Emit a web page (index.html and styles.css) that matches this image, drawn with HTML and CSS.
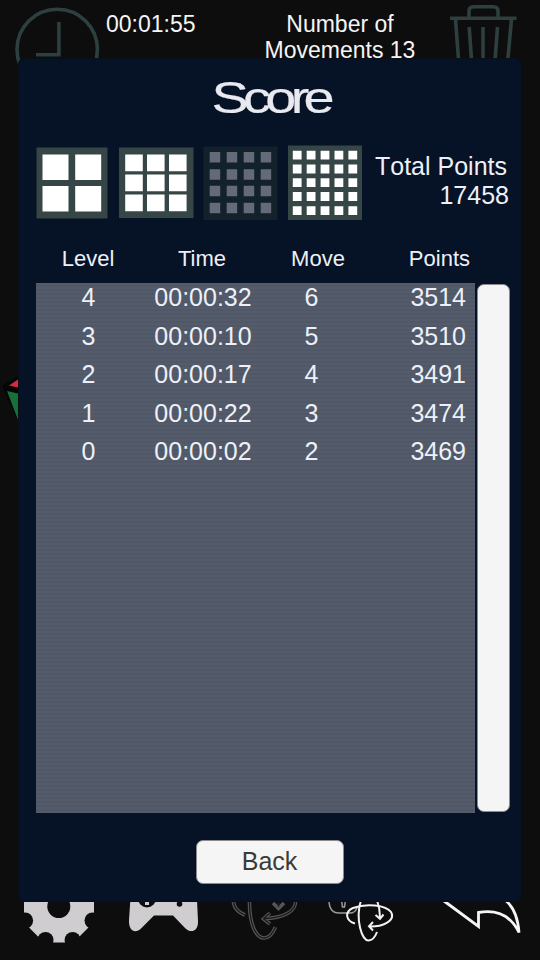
FILE: index.html
```
<!DOCTYPE html>
<html lang="en">
<head>
  <meta charset="UTF-8">
  <meta name="viewport" content="width=device-width, initial-scale=1.0">
  <title>Score</title>
  <link rel="stylesheet" href="styles.css">
</head>
<body>
  <div class="game">
    <div class="top-bar">
      <svg class="clock-icon" viewBox="15 7 85 85">
        <circle cx="57.2" cy="49.5" r="40.2"/>
        <path d="M36 54.7H58.9V22"/>
      </svg>
      <div class="timer">00:01:55</div>
      <div class="movements">Number of Movements 13</div>
      <svg class="trash-icon" viewBox="450 4 67 80">
        <path d="M450 18.2H516.5"/>
        <path d="M469 17V11Q469 6.8 474 6.8H493Q498 6.8 498 11V17"/>
        <path d="M455.5 19L460 80H506L511.500 19"/>
        <path d="M469.200 27L472.500 74M483 27V74M497.500 27L494 74"/>
      </svg>
    </div>

    <div class="board">
      <svg class="cube-icon" viewBox="0 374 24 50">
        <path class="cube-body" d="M2 386L24 372V424L18 421Z"/>
        <path class="cube-red" d="M9 385.500L18 379.500V387.500Z"/>
        <path class="cube-green" d="M7 391L18 393.500V420Z"/>
      </svg>
    </div>

    <div class="bottom-bar">
      <svg class="gear-icon" viewBox="22 870 74 74">
        <path class="gear-body" d="M24 892L44 872H74L94 892V921L87 929L80 936L73.500 942.500H44L37.500 936L30.500 929L24 921Z"/>
        <g class="gear-cut">
          <circle cx="58.8" cy="906.500" r="11.500"/>
          <circle cx="92.500" cy="920.500" r="8"/>
          <circle cx="72.600" cy="940" r="8"/>
          <circle cx="45.500" cy="940" r="8"/>
          <circle cx="25.100" cy="920.500" r="8"/>
        </g>
      </svg>
      <svg class="pad-icon" viewBox="128 870 72 74">
        <path class="pad-body" d="M131 890L129 920C128.500 932 136 933.500 141 928.500L154 915.500H173L185 928C190 933.500 198.500 932 198 921L196.500 890Z"/>
        <circle class="pad-cut" cx="147" cy="898.500" r="9"/>
        <path class="pad-body" d="M145 902H149V905H145Z"/>
        <circle class="pad-cut" cx="179.500" cy="904" r="2.800"/>
      </svg>
      <svg class="rotate-icon" viewBox="230 870 70 74">
        <g class="rotate-edge">
          <path d="M233.500 900Q233 910 245 915"/>
          <path d="M249.500 900C249 924 256 938 264 938C269 938 273 933 275.500 927"/>
          <path d="M295.500 900C297 912 282 918 264 918.500M270 913L263.500 918.800L270 924"/>
          <path d="M273 903L278.500 908.500L284 903"/>
        </g>
        <g class="rotate-core">
          <path d="M233.500 900Q233 910 245 915"/>
          <path d="M249.500 900C249 924 256 938 264 938C269 938 273 933 275.500 927"/>
          <path d="M295.500 900C297 912 282 918 264 918.500M270 913L263.500 918.800L270 924"/>
          <path d="M278.500 900V907"/>
        </g>
      </svg>
      <svg class="lock-icon" viewBox="328 870 66 74">
        <path class="lock-body" d="M329 900Q329 913 339 913H350Q355 913 357 908M341.500 900L342.500 907H344.500L345.500 900"/>
        <path d="M355 923.500C346 921 344 912 353 908C366 903 386 905 391 912C396 921 382 927 369 926.500M373 922L369 926.300L373 930.500"/>
        <path d="M361 900C355 920 362 940.500 368.500 940.500C373 940.500 375.500 936 377 932"/>
        <path d="M377 900Q380 909 380 917.500M375.500 915L380 918.800L383.500 914.500"/>
      </svg>
      <svg class="back-icon" viewBox="440 870 82 74">
        <path d="M442 899.500L478.500 926.500V912.500C495 909.500 510 914 519 932.500C518 918 514 907 505 900"/>
      </svg>
    </div>
  </div>

  <div class="score-panel">
    <h1 class="score-title"><span>Score</span></h1>

    <div class="summary">
      <div class="sizes">
        <svg class="size-icon" viewBox="0 0 74 74">
          <path class="frame" d="M.5 1.500H71.500V72.500H.5Z"/>
          <path class="cells" d="M6.500 8.500h26v25.500h-26zM39.200 8.500h26v25.500h-26zM6.500 40h26v25.500h-26zM39.200 40h26v25.500h-26z"/>
        </svg>
        <svg class="size-icon" viewBox="0 0 74 74">
          <path class="frame" d="M-1 1.500H73.500V72H-1Z"/>
          <path class="cells" d="M5.200 8.500h17.600v16.800h-17.600zM27 8.500h17.600v16.800h-17.600zM49 8.500h17.600v16.800h-17.600zM5.200 28.500h17.600v16.800h-17.600zM27 28.500h17.600v16.800h-17.600zM49 28.500h17.600v16.800h-17.600zM5.200 48.500h17.600v16.800h-17.600zM27 48.500h17.600v16.800h-17.600zM49 48.500h17.600v16.800h-17.600z"/>
        </svg>
        <svg class="size-icon disabled" viewBox="0 0 74 74">
          <path class="frame" d="M-.5 .5H73.500V74H-.5Z"/>
          <path class="cell-row" d="M5.700 11.300H68"/>
          <path class="cell-row" d="M5.700 28.500H68"/>
          <path class="cell-row" d="M5.700 45H68"/>
          <path class="cell-row" d="M5.700 62H68"/>
        </svg>
        <svg class="size-icon five" viewBox="0 0 74 74">
          <path class="frame" d="M0-.5H74V74H0Z"/>
          <path class="cell-row" d="M4.800 9.200H70"/>
          <path class="cell-row" d="M4.800 23H70"/>
          <path class="cell-row" d="M4.800 36.700H70"/>
          <path class="cell-row" d="M4.800 50.500H70"/>
          <path class="cell-row" d="M4.800 64.700H70"/>
        </svg>
      </div>
      <div class="total">
        <div class="total-label">Total Points</div>
        <div class="total-value">17458</div>
      </div>
    </div>

    <div class="table-head">
      <div>Level</div>
      <div>Time</div>
      <div>Move</div>
      <div class="points">Points</div>
    </div>

    <div class="table-area">
      <div class="table-body">
        <div class="row"><div>4</div><div>00:00:32</div><div>6</div><div class="points">3514</div></div>
        <div class="row"><div>3</div><div>00:00:10</div><div>5</div><div class="points">3510</div></div>
        <div class="row"><div>2</div><div>00:00:17</div><div>4</div><div class="points">3491</div></div>
        <div class="row"><div>1</div><div>00:00:22</div><div>3</div><div class="points">3474</div></div>
        <div class="row"><div>0</div><div>00:00:02</div><div>2</div><div class="points">3469</div></div>
      </div>
      <div class="scrollbar"></div>
    </div>

    <button class="back-btn">Back</button>
  </div>
</body>
</html>
```

FILE: styles.css
```
* {
  margin: 0;
  padding: 0;
  box-sizing: border-box;
  font-family: "Liberation Sans", Arial, sans-serif;
}

body {
  position: relative;
  width: 540px;
  height: 960px;
  background-color: #0d0d0d;
  overflow: hidden;
}

svg {
  display: block;
  flex: none;
  fill: none;
}

.game {
  display: flex;
  flex-direction: column;
  height: 100%;
}

/* top bar */
.top-bar {
  display: flex;
  height: 100px;
  padding-left: 15px;
  color: #f5f5f5;
  font-size: 23px;
  line-height: 26px;
}

.clock-icon {
  width: 85px;
  height: 85px;
  margin-top: 7px;
  stroke: #2e3f3f;
  stroke-width: 3.6;
}

.timer {
  width: 104px;
  margin: 11px 0 0 6px;
}

.movements {
  width: 180px;
  margin: 11px 0 0 40px;
  text-align: center;
}

.trash-icon {
  width: 67px;
  height: 80px;
  margin: 4px 0 0 20px;
  stroke: #2e3f3f;
  stroke-width: 3.6;
}

.board {
  flex: 1;
  padding-top: 274px;
}

.cube-icon {
  width: 24px;
  height: 50px;
}

.cube-body {
  fill: #050505;
}

.cube-red {
  fill: #d92a3c;
}

.cube-green {
  fill: #17703a;
}

/* bottom bar */
.bottom-bar {
  display: flex;
  height: 90px;
  padding-left: 22px;
}

.bottom-bar svg {
  height: 74px;
}

.gear-icon {
  width: 74px;
  margin-right: 32px;
}

.gear-body,
.pad-body {
  fill: #cfcdcf;
}

.gear-cut,
.pad-cut {
  fill: #0d0d0d;
}

.pad-icon {
  width: 72px;
  margin-right: 30px;
}

.rotate-icon {
  width: 70px;
  margin-right: 28px;
}

.rotate-edge {
  stroke: #555;
  stroke-width: 3.6;
}

.rotate-core {
  stroke: #1c1c1c;
  stroke-width: 1.3;
}

.lock-icon {
  width: 66px;
  margin-right: 46px;
  stroke: #f2f2f2;
  stroke-width: 2;
}

.lock-body {
  stroke: #9a9a9a;
  stroke-width: 1.5;
}

.back-icon {
  width: 82px;
  stroke: #f5f5f5;
  stroke-width: 2.8;
}

/* score dialog */
.score-panel {
  position: absolute;
  top: 58px;
  left: 18px;
  width: 504px;
  height: 844px;
  padding: 0 11px 0 18px;
  display: flex;
  flex-direction: column;
  background-color: #061226;
  border: 1px solid #080e1a;
  border-radius: 6px;
  color: #edf0f8;
}

.score-title {
  height: 87px;
  padding-top: 13px;
  margin-right: 6px;
  text-align: center;
  font-size: 44px;
  line-height: 52px;
  font-weight: normal;
  color: #e8eaf0;
}

.score-title span {
  display: inline-block;
  letter-spacing: -4.5px;
  transform: scaleX(1.27);
  -webkit-text-stroke: 0.2px #e8eaf0;
}

.summary {
  display: flex;
  justify-content: space-between;
  height: 94px;
  margin-left: -1px;
  padding-right: 1px;
}

.sizes {
  display: flex;
  gap: 10px;
}

.size-icon {
  width: 74px;
  height: 74px;
  overflow: visible;
}

.frame {
  fill: #364545;
}

.cells {
  fill: #fff;
}

.cell-row {
  stroke: #fff;
  stroke-width: 10.5;
  stroke-dasharray: 10.5 6.5;
}

.disabled .frame {
  fill: #13212b;
}

.disabled .cell-row {
  stroke: #656a7b;
}

.five .cell-row {
  stroke-width: 8.8;
  stroke-dasharray: 8.8 5.1;
}

.total {
  padding-top: 6px;
  text-align: right;
  font-size: 25px;
  line-height: 29px;
  white-space: nowrap;
  font-kerning: none;
}

.total-label {
  margin-right: 2px;
}

.table-head,
.row {
  display: grid;
  text-align: center;
}

.table-head {
  grid-template-columns: 104px 124px 108px 98px;
  height: 43px;
  margin-left: -1px;
  font-size: 22px;
  line-height: 38px;
}

.table-area {
  display: flex;
  gap: 2px;
  height: 530px;
  margin-left: -1px;
}

.table-body {
  width: 439px;
  background: repeating-linear-gradient(#545b6b 0 2px, #505868 2px 4px);
}

.row {
  grid-template-columns: 105px 124px 93px 108px;
  height: 38.5px;
  font-size: 25px;
  line-height: 29px;
}

.points {
  text-align: right;
}

.scrollbar {
  width: 33px;
  height: 528px;
  margin-top: 1px;
  background-color: #f5f5f5;
  border: 1px solid #8c8a8c;
  border-radius: 7px;
}

.back-btn {
  align-self: center;
  width: 148px;
  height: 44px;
  margin: 27px 0 0 -8px;
  padding-bottom: 2px;
  background-color: #f5f5f5;
  border: 1px solid #8c8a8c;
  border-radius: 7px;
  color: #3a3a3a;
  font-size: 25px;
}
```
